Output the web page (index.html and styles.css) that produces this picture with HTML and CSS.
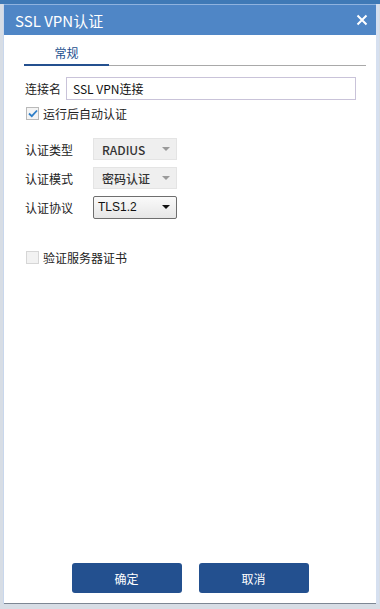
FILE: index.html
```html
<!DOCTYPE html>
<html>
<head>
<meta charset="utf-8">
<title>SSL VPN认证</title>
<link rel="stylesheet" href="styles.css">
</head>
<body>
  <div class="dialog">
    <div class="titlebar">
      <span class="title">SSL VPN认证</span>
      <svg class="close" width="12" height="12" viewBox="0 0 12 12">
        <path d="M1.5 1.5 L10.5 10.5 M10.5 1.5 L1.5 10.5" stroke="#fff" stroke-width="2" fill="none"/>
      </svg>
    </div>

    <div class="tabs">
      <div class="tab active">常规</div>
    </div>

    <div class="form">
      <div class="row">
        <span class="label">连接名</span>
        <div class="input">SSL VPN连接</div>
      </div>
      <div class="row check-row">
        <span class="checkbox checked">
          <svg width="10" height="9" viewBox="0 0 10 9">
            <path d="M1 4.5 L3.8 7.2 L9 1.5" stroke="#2f7fc8" stroke-width="1.8" fill="none"/>
          </svg>
        </span>
        <span>运行后自动认证</span>
      </div>

      <div class="group">
        <div class="row">
          <span class="label wide">认证类型</span>
          <div class="select disabled"><span>RADIUS</span><i class="arrow"></i></div>
        </div>
        <div class="row">
          <span class="label wide">认证模式</span>
          <div class="select disabled"><span>密码认证</span><i class="arrow"></i></div>
        </div>
        <div class="row">
          <span class="label wide">认证协议</span>
          <div class="select enabled"><span>TLS1.2</span><i class="arrow"></i></div>
        </div>
      </div>

      <div class="row check-row last">
        <span class="checkbox disabled"></span>
        <span>验证服务器证书</span>
      </div>
    </div>

    <div class="footer">
      <button class="btn">确定</button>
      <button class="btn">取消</button>
    </div>
  </div>
</body>
</html>
```

FILE: styles.css
```css
html, body {
  margin: 0;
  height: 100%;
}

body {
  background: #d7dde5;
  border-top: 4px solid #3f79b6;
  box-sizing: border-box;
  padding: 0 4px 0 4px;
  font-family: "Noto Sans CJK SC", "Noto Sans", sans-serif;
  font-size: 12px;
  color: #222;
}

.dialog {
  width: 372px;
  height: 600px;
  background: #fff;
  display: flex;
  flex-direction: column;
  box-shadow: -1px 0 0 #c9d7ec, 3px 0 0 #d6e0f0;
  border-bottom: 1px solid #7d8794;
  box-sizing: border-box;
}

.titlebar {
  height: 31px;
  background: #4f86c6;
  display: flex;
  align-items: center;
  justify-content: space-between;
  padding: 0 8px 0 11px;
  border-top: 1px solid #8fb2de;
  box-sizing: border-box;
}

.title {
  color: #fff;
  font-size: 15px;
  font-family: "Noto Sans CJK SC", "Noto Sans", sans-serif;
  padding-top: 1px;
}

.close {
  display: block;
}

.tabs {
  margin: 8px 10px 0 20px;
  border-bottom: 1px solid #a9a9a9;
  display: flex;
}

.tab {
  width: 85px;
  text-align: center;
  height: 21px;
  line-height: 19px;
  color: #24508f;
  font-size: 12px;
}

.tab.active {
  border-bottom: 2px solid #24508f;
  margin-bottom: -1px;
}

.form {
  padding: 11px 20px 0 21px;
}

.row {
  display: flex;
  align-items: center;
}

.label {
  width: 41px;
  flex: none;
}

.label.wide {
  width: 68px;
}

.input {
  flex: 1;
  height: 23px;
  border: 1px solid #c9c3d9;
  box-sizing: border-box;
  padding: 0 6px;
  line-height: 21px;
  font-size: 12px;
  color: #111;
}

.check-row {
  margin-top: 3px;
  height: 21px;
}

.checkbox {
  width: 13px;
  height: 13px;
  box-sizing: border-box;
  border: 1px solid #c7c7c7;
  background: #f0f0f0;
  margin: 0 4px 0 1px;
  display: flex;
  align-items: center;
  justify-content: center;
}

.checkbox.checked {
  background: #f4f4f4;
  border-color: #b9b9b9;
}

.checkbox.disabled {
  background: #f2f2f2;
  border-color: #d6d6d6;
}

.check-row.last {
  margin-top: 29px;
  color: #222;
}

.group {
  margin-top: 14px;
}

.group .row {
  height: 22px;
  margin-bottom: 7px;
}

.group .row:last-child {
  margin-bottom: 0;
}

.select {
  width: 84px;
  height: 22px;
  box-sizing: border-box;
  display: flex;
  align-items: center;
  justify-content: space-between;
  padding: 0 6px 0 8px;
  font-family: "Liberation Sans", "Noto Sans CJK SC", sans-serif;
  font-size: 12px;
}

.select.disabled {
  background: #efefef;
  border: 1px solid #e4e4e4;
  color: #333;
  font-family: "Noto Sans CJK SC", sans-serif;
}

.select.disabled span {
  font-weight: 500;
}

.select.enabled {
  background: linear-gradient(#fafafa, #e6e6e6);
  border: 1px solid #6e6e6e;
  border-radius: 2px;
  padding-left: 4px;
  color: #111;
  height: 23px;
}

.arrow {
  width: 0;
  height: 0;
  border-left: 4px solid transparent;
  border-right: 4px solid transparent;
  border-top: 4px solid #9a9a9a;
}

.enabled .arrow {
  border-top-color: #111;
}

.footer {
  margin-top: auto;
  display: flex;
  justify-content: center;
  gap: 17px;
  padding-bottom: 10px;
}

.btn {
  width: 110px;
  height: 30px;
  background: #23508f;
  color: #fff;
  border: none;
  border-radius: 3px;
  font-family: "Noto Sans CJK SC", sans-serif;
  font-size: 12px;
}
```
